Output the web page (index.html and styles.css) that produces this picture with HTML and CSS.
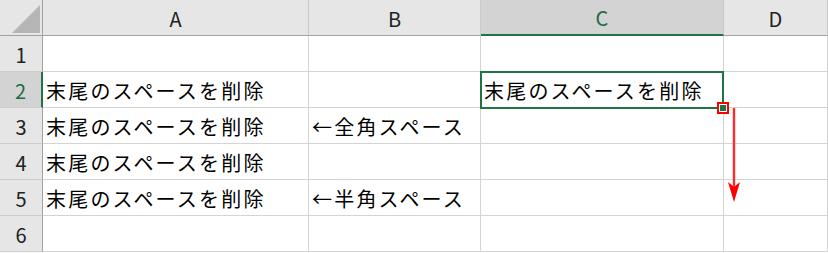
FILE: index.html
```html
<!DOCTYPE html>
<html lang="ja">
<head>
<meta charset="utf-8">
<title>Sheet</title>
<link rel="stylesheet" href="styles.css">
</head>
<body>
<div class="sheet">
  <div class="corner"><span class="tri"></span></div>
  <div class="colh">A</div>
  <div class="colh">B</div>
  <div class="colh sel">C</div>
  <div class="colh">D</div>

  <div class="rowh">1</div>
  <div class="cell"></div><div class="cell"></div><div class="cell"></div><div class="cell"></div>

  <div class="rowh sel">2</div>
  <div class="cell">末尾のスペースを削除</div><div class="cell"></div><div class="cell">末尾のスペースを削除</div><div class="cell"></div>

  <div class="rowh">3</div>
  <div class="cell">末尾のスペースを削除</div><div class="cell">←全角スペース</div><div class="cell"></div><div class="cell"></div>

  <div class="rowh">4</div>
  <div class="cell">末尾のスペースを削除</div><div class="cell"></div><div class="cell"></div><div class="cell"></div>

  <div class="rowh">5</div>
  <div class="cell">末尾のスペースを削除</div><div class="cell">←半角スペース</div><div class="cell"></div><div class="cell"></div>

  <div class="rowh">6</div>
  <div class="cell"></div><div class="cell"></div><div class="cell"></div><div class="cell"></div>

  <div class="selection"></div>
  <div class="handle"><span class="handle-dot"></span></div>
  <svg class="arrow" width="20" height="100" viewBox="0 0 20 100">
    <line x1="10" y1="0" x2="10" y2="80" stroke="#ff2a2a" stroke-width="2.4"/>
    <polygon points="4,74 10,79 16,74 10,94" fill="#ff0000"/>
  </svg>
</div>
</body>
</html>
```

FILE: styles.css
```css
html, body {
  margin: 0;
  padding: 0;
  background: #ffffff;
  overflow: hidden;
}

.sheet {
  position: relative;
  display: grid;
  grid-template-columns: 43px 266px 172px 243px 104px;
  grid-template-rows: repeat(7, 36px);
  width: 828px;
  font-family: "Noto Sans CJK JP", "Noto Sans", sans-serif;
}

.corner {
  position: relative;
  background: #e6e6e6;
  border-right: 1px solid #a3a3a3;
  border-bottom: 1px solid #a3a3a3;
}

.tri {
  position: absolute;
  left: 12px;
  top: 5px;
  width: 28px;
  height: 28px;
  background: #b6b6b6;
  clip-path: polygon(100% 0, 100% 100%, 0 100%);
}

.colh {
  background: #e6e6e6;
  border-right: 1px solid #c9c9c9;
  border-bottom: 1px solid #a3a3a3;
  display: flex;
  align-items: center;
  justify-content: center;
  font-size: 20px;
  color: #222;
  padding-top: 1px;
}

.colh.sel {
  background: #d3d3d3;
  color: #1d6a43;
  border-bottom: 2px solid #217346;
}

.rowh {
  background: #e6e6e6;
  border-right: 1px solid #a3a3a3;
  border-bottom: 1px solid #cdcdcd;
  display: flex;
  align-items: center;
  justify-content: center;
  font-size: 20px;
  color: #222;
  padding-top: 1px;
}

.rowh.sel {
  background: #d3d3d3;
  color: #1d6a43;
  border-right: 2px solid #217346;
}

.cell {
  border-right: 1px solid #d4d4d4;
  border-bottom: 1px solid #d4d4d4;
  display: flex;
  align-items: center;
  padding-left: 3px;
  padding-top: 2px;
  font-size: 20px;
  letter-spacing: 2.2px;
  color: #000;
  white-space: nowrap;
  overflow: visible;
}

.selection {
  position: absolute;
  left: 480px;
  top: 71px;
  width: 240px;
  height: 34px;
  border: 2px solid #217346;
  pointer-events: none;
}

.handle {
  position: absolute;
  left: 717px;
  top: 102px;
  width: 8px;
  height: 8px;
  border: 2px solid #ff0000;
  background: #ffffff;
  display: flex;
  align-items: center;
  justify-content: center;
}

.handle-dot {
  width: 6px;
  height: 6px;
  background: #217346;
}

.arrow {
  position: absolute;
  left: 724px;
  top: 108px;
}
```
